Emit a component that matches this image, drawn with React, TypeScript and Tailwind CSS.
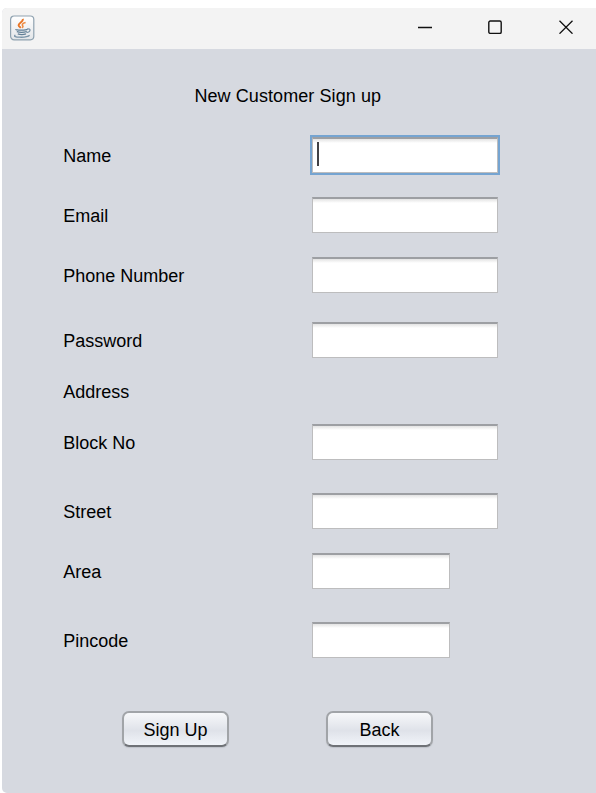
type RowProps = { label: string; gap: string; field?: string; focused?: boolean };

const rows: RowProps[] = [
  { label: "Name", gap: "mt-6", field: "w-[186px]", focused: true },
  { label: "Email", gap: "mt-6", field: "w-[186px]" },
  { label: "Phone Number", gap: "mt-6", field: "w-[186px]" },
  { label: "Password", gap: "mt-[29px]", field: "w-[186px]" },
  { label: "Address", gap: "mt-[15px]" },
  { label: "Block No", gap: "mt-[15px]", field: "w-[186px]" },
  { label: "Street", gap: "mt-[33px]", field: "w-[186px]" },
  { label: "Area", gap: "mt-6", field: "w-[138px]" },
  { label: "Pincode", gap: "mt-[33px]", field: "w-[138px]" },
];

function JavaIcon() {
  return (
    <svg width="26" height="26" viewBox="0 0 26 26" fill="none">
      <defs>
        <linearGradient id="tile" x1="0" y1="0" x2="0" y2="1">
          <stop offset="0" stopColor="#ffffff" />
          <stop offset="1" stopColor="#e2e5e8" />
        </linearGradient>
      </defs>
      <rect x="1.6" y="1" width="23.2" height="23.8" rx="3.5" fill="url(#tile)" stroke="#8fa2b0" strokeWidth="1.2" />
      <path d="M13.8 3.9c1 2.9-4.8 4-4.2 6.7.3 1 1.5 1.5 2.2 2.3" stroke="#e87525" strokeWidth="1.9" />
      <path d="M16.6 7.6c-3 .8-4 1.9-2.9 3.2.6.8.2 1.5-.5 2.1" stroke="#ed8b42" strokeWidth="1.6" />
      <path d="M6.8 14.2c-.5 1 10 1.2 11.8 0M7.8 16.6c2.5.8 7.2.8 10-.1M8.8 18.9c2.2.7 5.9.7 8.2-.1" stroke="#617f96" strokeWidth="1.3" />
      <path d="M18.2 14c4-.8 3.8 3-.8 3.7M6.4 20.2c-4.6 2.2 11.2 3.1 14.2.1" stroke="#7b95a9" strokeWidth="1.3" />
    </svg>
  );
}

function Field({ width, focused }: { width: string; focused?: boolean }) {
  return (
    <div
      className={`${width} h-9 border border-t-2 border-[#bdbdbe] border-t-[#9d9fa3] bg-white bg-linear-to-b from-[#e3e3e3] to-white to-[4px] ${
        focused ? "shadow-[0_0_0_2px_#75a4d1]" : ""
      }`}
    >
      {focused && <div className="mt-[3px] ml-[4px] h-6 w-[2px] bg-[#414145]" />}
    </div>
  );
}

function Button({ children }: { children: string }) {
  return (
    <button className="flex h-9 w-[107px] items-center justify-center rounded-[7px] border-2 border-[#a1a4a8] border-b-[#6f7277] bg-linear-to-b from-[#f7f8fa] via-[#dfe2e9] via-55% to-[#f1f4f9] pt-[1px] shadow-[0_1px_1px_#bfc3ca]">
      {children}
    </button>
  );
}

export default function App() {
  return (
    <div className="h-[793px] w-[596px] overflow-hidden bg-white pt-2 pl-0.5 font-['Liberation_Sans',Arial,sans-serif] text-[18px] leading-5 text-black">
      <div className="flex h-[785px] flex-col overflow-hidden rounded-l-[5px] bg-[#d6d9e0]">
        <header className="flex h-[41px] shrink-0 items-center justify-between bg-[#f3f3f3] pr-[23px] pl-[7px]">
          <div className="pb-[1px]"><JavaIcon /></div>
          <div className="flex items-center gap-14 pb-[3px]">
            <svg width="14" height="14" viewBox="0 0 14 14" stroke="#111" strokeWidth="1.4"><path d="M0 7.5h14" /></svg>
            <svg width="14" height="14" viewBox="0 0 14 14" fill="none" stroke="#111" strokeWidth="1.4"><rect x=".8" y="1" width="12.4" height="12.4" rx="1.5" /></svg>
            <svg className="ml-[1px]" width="14" height="14" viewBox="0 0 14 14" stroke="#111" strokeWidth="1.3"><path d="m.5.7 13 13M13.5.7l-13 13" /></svg>
          </div>
        </header>
        <main className="flex flex-col">
          <h1 className="mt-9 ml-[192.4px] h-7 pt-[1px] tracking-[0.08px]">New Customer Sign up</h1>
          {rows.map((r) => (
            <div key={r.label} className={`${r.gap} flex h-9`}>
              <div className="ml-[61.3px] w-[247.7px] shrink-0 pt-[9px]">{r.label}</div>
              {r.field && <div className="ml-[1px]"><Field width={r.field} focused={r.focused} /></div>}
            </div>
          ))}
          <div className="mt-[53px] ml-[120px] flex gap-[97px]">
            <Button>Sign Up</Button>
            <Button>Back</Button>
          </div>
        </main>
      </div>
    </div>
  );
}
